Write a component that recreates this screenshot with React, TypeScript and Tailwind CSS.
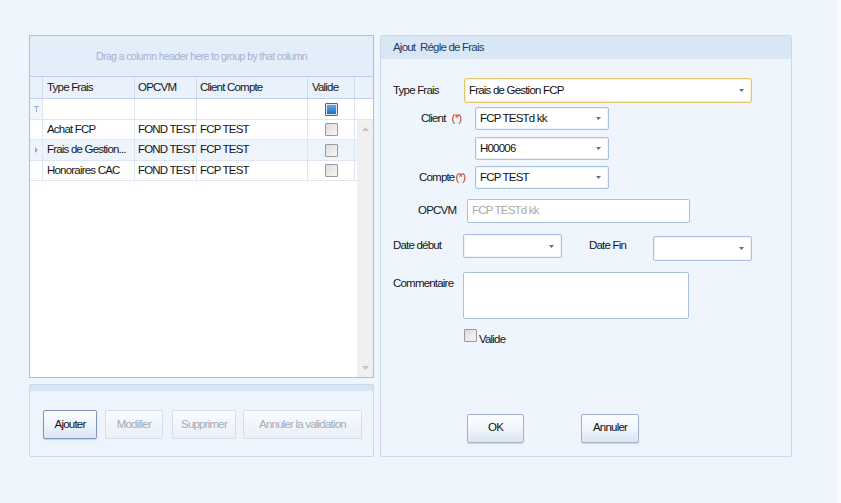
import React from "react";

const Arrow = () => (
  <svg width="5" height="3" viewBox="0 0 5 3" className="shrink-0">
    <path d="M0 0h5L2.5 3z" fill="#5d6d83" />
  </svg>
);

function Combo({ className, text, focused }: { className: string; text?: string; focused?: boolean }) {
  return (
    <div
      className={
        "flex items-center justify-between rounded-[2px] border bg-white pl-[4px] pr-[7px] " +
        (focused ? "border-[#e3c66f] shadow-[inset_0_0_0_1px_#fbf0cc]" : "border-[#a9c1df] shadow-[inset_0_0_0_1px_#eef4fb]") +
        " " +
        className
      }
    >
      <span className="whitespace-nowrap text-[#111]">{text ?? ""}</span>
      <Arrow />
    </div>
  );
}

function CheckBox({ filled }: { filled?: boolean }) {
  return filled ? (
    <div className="flex h-[13px] w-[13px] items-center justify-center rounded-[1px] border border-[#4a6a8c] bg-[#dfe9f4]">
      <div className="h-[9px] w-[9px] bg-gradient-to-b from-[#5aa9ec] to-[#1f6fc0]" />
    </div>
  ) : (
    <div className="h-[13px] w-[13px] rounded-[1px] border border-[#9a9a9a] bg-gradient-to-br from-[#dcdcdc] to-[#f7f7f7]" />
  );
}

function Btn({ label, className, disabled, strong }: { label: string; className: string; disabled?: boolean; strong?: boolean }) {
  return (
    <div
      className={
        "flex items-center justify-center whitespace-nowrap rounded-[2px] border bg-gradient-to-b from-[#fbfdff] via-[#f0f5fb] to-[#dbe4f0] " +
        (disabled
          ? "border-[#d3deec] text-[#a3acb8] from-[#f6f9fd] to-[#eaf0f7]"
          : strong
          ? "border-[#7d97bd] text-[#111] shadow-[0_1px_1px_rgba(120,140,170,0.35)]"
          : "border-[#9fb3cf] text-[#111] shadow-[0_1px_1px_rgba(120,140,170,0.3)]") +
        " " +
        className
      }
    >
      {label}
    </div>
  );
}

const rows = [
  { t: "Achat FCP", o: "FOND TEST", c: "FCP TEST", cur: false, h: "h-[20px]" },
  { t: "Frais de Gestion...", o: "FOND TEST", c: "FCP TEST", cur: true, h: "h-[21px]" },
  { t: "Honoraires CAC", o: "FOND TEST", c: "FCP TEST", cur: false, h: "h-[20px]" },
];

export default function App() {
  return (
    <div className="h-[503px] w-[841px] overflow-hidden border-r-[3px] border-[#f8fbff] bg-[#eef5fd] font-['Liberation_Sans',Arial,sans-serif] text-[11.5px] leading-none tracking-[-0.8px] text-[#161616]">
      <div className="flex gap-[6px] pl-[29px] pt-[35px]">
        {/* Left column */}
        <div className="flex w-[345px] flex-col gap-[6px]">
          <div className="flex h-[343px] flex-col border border-[#a3c0e6] bg-white">
            <div className="flex h-[41px] items-center justify-center whitespace-nowrap border-b border-[#b9cfee] bg-[#e4eefb] text-[10.5px] tracking-[-0.6px] text-[#9fb2cd]">
              Drag a column header here to group by that column
            </div>
            <div className="flex h-[22px] whitespace-nowrap border-b border-[#bdd2ee] bg-[#e9f1fb]">
              <div className="w-[13px] border-r border-[#cddcf1]" />
              <div className="flex w-[92px] items-center border-r border-[#cddcf1] pl-[4px]">Type Frais</div>
              <div className="flex w-[62px] items-center border-r border-[#cddcf1] pl-[3px]">OPCVM</div>
              <div className="flex w-[111px] items-center border-r border-[#cddcf1] pl-[3px]">Client Compte</div>
              <div className="flex w-[47px] items-center border-r border-[#cddcf1] pl-[4px]">Valide</div>
              <div className="flex-1" />
            </div>
            <div className="flex h-[21px] border-b border-[#dde7f4]">
              <div className="flex w-[13px] items-center justify-center border-r border-[#dde7f4] bg-[#f3f7fc]">
                <svg width="5" height="6" viewBox="0 0 5 6">
                  <path d="M0 0h5v1H3v5H2V1H0z" fill="#8fb0d8" />
                </svg>
              </div>
              <div className="w-[92px] border-r border-[#dde7f4]" />
              <div className="w-[62px] border-r border-[#dde7f4]" />
              <div className="w-[111px] border-r border-[#dde7f4]" />
              <div className="flex w-[47px] items-center justify-center border-r border-[#dde7f4]">
                <CheckBox filled />
              </div>
              <div className="flex-1" />
            </div>
            <div className="flex flex-1">
              <div className="flex flex-1 flex-col">
                {rows.map((r) => (
                  <div key={r.t} className={"flex whitespace-nowrap border-b border-[#dde7f4] " + r.h + (r.cur ? " bg-[#eef4fc]" : "")}>
                    <div className="flex w-[13px] items-center justify-center border-r border-[#dde7f4]">
                      {r.cur && (
                        <svg width="3" height="6" viewBox="0 0 3 6">
                          <path d="M0 0l3 3-3 3z" fill="#8daed6" />
                        </svg>
                      )}
                    </div>
                    <div className="flex w-[92px] items-center overflow-hidden border-r border-[#dde7f4] pl-[4px]">{r.t}</div>
                    <div className="flex w-[62px] items-center overflow-hidden border-r border-[#dde7f4] pl-[3px]">{r.o}</div>
                    <div className="flex w-[111px] items-center border-r border-[#dde7f4] pl-[3px]">{r.c}</div>
                    <div className="flex w-[47px] items-center justify-center border-r border-[#dde7f4]">
                      <CheckBox />
                    </div>
                    <div className="flex-1" />
                  </div>
                ))}
              </div>
              <div className="flex w-[16px] flex-col items-center justify-between bg-[#f0f0f0] pb-[7px] pt-[7px]">
                <svg width="7" height="4" viewBox="0 0 7 4">
                  <path d="M0 4L3.5 0 7 4z" fill="#c4c4c4" />
                </svg>
                <svg width="7" height="4" viewBox="0 0 7 4">
                  <path d="M0 0h7L3.5 4z" fill="#c4c4c4" />
                </svg>
              </div>
            </div>
          </div>
          <div className="flex h-[73px] flex-col rounded-[2px] border border-[#c9d9ee] bg-[#edf4fc]">
            <div className="h-[6px] bg-[#d8e5f5]" />
            <div className="mt-[19px] flex pl-[13px]">
              <Btn label="Ajouter" strong className="h-[29px] w-[54px]" />
              <Btn label="Modifier" disabled className="ml-[8px] h-[29px] w-[58px]" />
              <Btn label="Supprimer" disabled className="ml-[9px] h-[29px] w-[64px]" />
              <Btn label="Annuler la validation" disabled className="ml-[7px] h-[29px] w-[119px]" />
            </div>
          </div>
        </div>

        {/* Right panel */}
        <div className="flex h-[422px] w-[412px] flex-col whitespace-nowrap rounded-[2px] border border-[#c9d9ee] bg-[#eef5fd]">
          <div className="flex h-[23px] items-center bg-[#d9e6f5] pl-[12px] text-[#223c62]">Ajout&nbsp; Régle de Frais</div>
          <div className="flex flex-col pl-[12px]">
            <div className="mt-[19px] flex h-[25px] items-center">
              <div className="w-[71px]">Type Frais</div>
              <Combo className="h-[25px] w-[288px]" text="Frais de Gestion FCP" focused />
            </div>
            <div className="mt-[4px] flex h-[23px] items-center">
              <div className="flex w-[82px] pl-[28px]">
                <span>Client</span>
                <span className="ml-[6px] text-[#c0392b]">(*)</span>
              </div>
              <Combo className="h-[23px] w-[134px]" text="FCP TESTd kk" />
            </div>
            <div className="mt-[7px] flex h-[23px] items-center pl-[82px]">
              <Combo className="h-[23px] w-[134px]" text="H00006" />
            </div>
            <div className="mt-[6px] flex h-[23px] items-center">
              <div className="flex w-[82px] pl-[26px]">
                <span>Compte</span>
                <span className="ml-[1px] text-[#c0392b]">(*)</span>
              </div>
              <Combo className="h-[23px] w-[134px]" text="FCP TEST" />
            </div>
            <div className="mt-[10px] flex h-[24px] items-center">
              <div className="w-[74px] pl-[25px]">OPCVM</div>
              <div className="flex h-[24px] w-[223px] items-center rounded-[2px] border border-[#a9c1df] bg-white pl-[4px] text-[#a9a9a9]">
                FCP TESTd kk
              </div>
            </div>
            <div className="mt-[11px] flex items-start">
              <div className="flex h-[24px] w-[70px] items-center">Date début</div>
              <Combo className="h-[24px] w-[99px]" />
              <div className="ml-[27px] flex h-[24px] w-[64px] items-center">Date Fin</div>
              <Combo className="mt-[2px] h-[25px] w-[99px]" />
            </div>
            <div className="mt-[11px] flex items-start">
              <div className="w-[70px] pt-[6px]">Commentaire</div>
              <div className="h-[47px] w-[226px] rounded-[2px] border border-[#a9c1df] bg-white" />
            </div>
            <div className="mt-[10px] flex items-start pl-[71px]">
              <CheckBox />
              <span className="ml-[2px] mt-[5px]">Valide</span>
            </div>
            <div className="mt-[68px] flex pl-[74px]">
              <Btn label="OK" className="h-[29px] w-[57px]" />
              <Btn label="Annuler" className="ml-[57px] h-[29px] w-[58px]" />
            </div>
          </div>
        </div>
      </div>
    </div>
  );
}
